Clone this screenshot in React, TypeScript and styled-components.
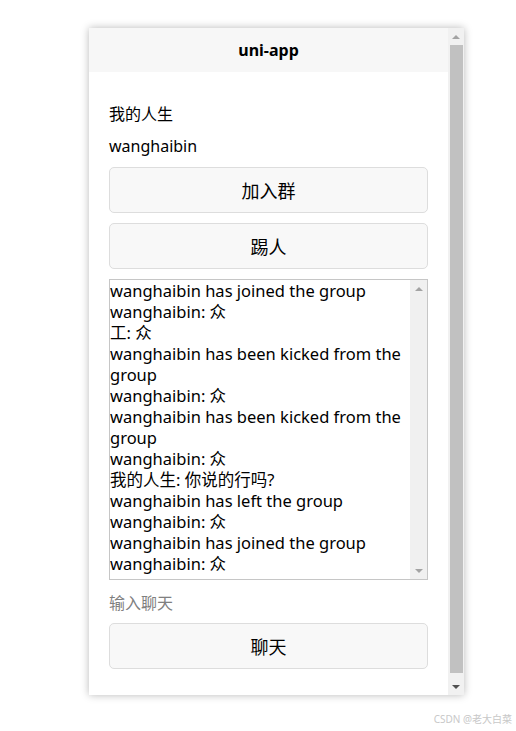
import React from "react";
import styled, { createGlobalStyle } from "styled-components";

const Global = createGlobalStyle`
  html, body { margin: 0; padding: 0; background: #ffffff; }
  body { font-family: "Noto Sans", "Noto Sans CJK SC", sans-serif; color: #000; }
`;

const Page = styled.div`
  width: 516px;
  height: 731px;
  padding: 28px 0 0 89px;
  box-sizing: border-box;
  display: flex;
  flex-direction: column;
`;

const Frame = styled.div`
  width: 375px;
  height: 667px;
  display: flex;
  flex-direction: row;
  background: #fff;
  box-shadow: 0 0 8px rgba(0, 0, 0, 0.28);
`;

const Main = styled.div`
  flex: 1;
  display: flex;
  flex-direction: column;
  min-width: 0;
`;

const Header = styled.div`
  height: 44px;
  background: #f7f7f7;
  display: flex;
  align-items: center;
  justify-content: center;
  font-weight: 700;
  font-size: 16px;
`;

const Body = styled.div`
  padding: 30px 20px 0 20px;
  display: flex;
  flex-direction: column;
`;

const Label = styled.div<{ $mb: number }>`
  font-size: 16px;
  line-height: 24px;
  margin-bottom: ${(p) => p.$mb}px;
`;

const Placeholder = styled.div`
  font-size: 16px;
  line-height: 24px;
  color: #808080;
  margin: 11px 0 8px 0;
`;

const Button = styled.div<{ $mb?: number }>`
  height: 44px;
  border: 1px solid #dddddd;
  border-radius: 5px;
  background: #f8f8f8;
  display: flex;
  align-items: center;
  justify-content: center;
  font-size: 18px;
  margin-bottom: ${(p) => p.$mb ?? 0}px;
`;

const ChatBox = styled.div`
  height: 299px;
  border: 1px solid #c6c6c6;
  display: flex;
  flex-direction: row;
  overflow: hidden;
`;

const Messages = styled.div`
  flex: 1;
  font-size: 16.5px;
  line-height: 21px;
  overflow: hidden;
`;

const Track = styled.div<{ $w: number; $bg: string }>`
  width: ${(p) => p.$w}px;
  flex-shrink: 0;
  background: ${(p) => p.$bg};
  display: flex;
  flex-direction: column;
  align-items: center;
`;

const ArrowBox = styled.div`
  height: 17px;
  width: 100%;
  display: flex;
  align-items: center;
  justify-content: center;
`;

const Arrow = styled.div<{ $up: boolean; $color: string }>`
  width: 0;
  height: 0;
  border-left: 4px solid transparent;
  border-right: 4px solid transparent;
  ${(p) =>
    p.$up
      ? `border-bottom: 4px solid ${p.$color};`
      : `border-top: 4px solid ${p.$color};`}
`;

const Thumb = styled.div`
  width: 13px;
  height: 628px;
  background: #c1c1c1;
`;

const Spacer = styled.div`
  flex: 1;
`;

const Watermark = styled.div`
  margin-top: 17px;
  padding-right: 4px;
  text-align: right;
  font-size: 10px;
  line-height: 14px;
  color: #c8c8c8;
`;

const messages = [
  "wanghaibin has joined the group",
  "wanghaibin: 众",
  "工: 众",
  "wanghaibin has been kicked from the group",
  "wanghaibin: 众",
  "wanghaibin has been kicked from the group",
  "wanghaibin: 众",
  "我的人生: 你说的行吗?",
  "wanghaibin has left the group",
  "wanghaibin: 众",
  "wanghaibin has joined the group",
  "wanghaibin: 众",
];

export default function App() {
  return (
    <>
      <Global />
      <Page>
        <Frame>
          <Main>
            <Header>uni-app</Header>
            <Body>
              <Label $mb={8}>我的人生</Label>
              <Label $mb={9}>wanghaibin</Label>
              <Button $mb={10}>加入群</Button>
              <Button $mb={10}>踢人</Button>
              <ChatBox>
                <Messages>
                  {messages.map((m, i) => (
                    <div key={i}>{m}</div>
                  ))}
                </Messages>
                <Track $w={17} $bg="#f0f0f0">
                  <ArrowBox>
                    <Arrow $up $color="#a3a3a3" />
                  </ArrowBox>
                  <Spacer />
                  <ArrowBox>
                    <Arrow $up={false} $color="#a3a3a3" />
                  </ArrowBox>
                </Track>
              </ChatBox>
              <Placeholder>输入聊天</Placeholder>
              <Button>聊天</Button>
            </Body>
          </Main>
          <Track $w={16} $bg="#f1f1f1">
            <ArrowBox>
              <Arrow $up $color="#a3a3a3" />
            </ArrowBox>
            <Thumb />
            <Spacer />
            <ArrowBox>
              <Arrow $up={false} $color="#505050" />
            </ArrowBox>
          </Track>
        </Frame>
        <Watermark>CSDN @老大白菜</Watermark>
      </Page>
    </>
  );
}
